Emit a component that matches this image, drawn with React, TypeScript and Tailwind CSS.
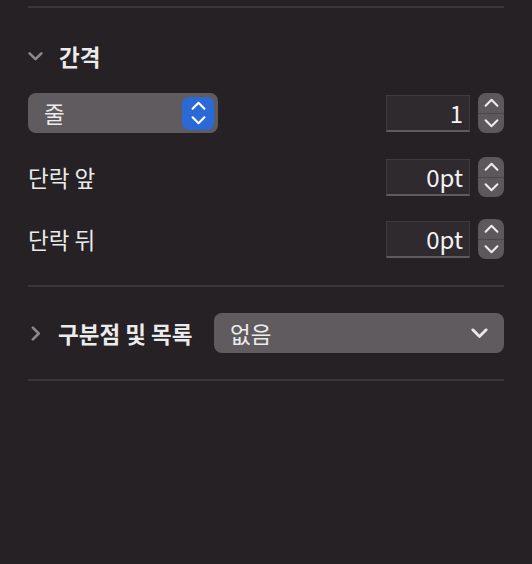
import React from 'react';

const FONT = { fontFamily: '"Noto Sans CJK KR", "Noto Sans", sans-serif' };

const Chevron: React.FC<{ dir: 'up' | 'down' | 'right'; size?: number; color?: string; stroke?: number }> = ({
  dir,
  size = 14,
  color = '#8c888c',
  stroke = 2.4,
}) => {
  const points =
    dir === 'down' ? '1.5,4 7,9.5 12.5,4' : dir === 'up' ? '1.5,10 7,4.5 12.5,10' : '4.5,1.5 10,7 4.5,12.5';
  return (
    <svg width={size} height={size} viewBox="0 0 14 14" fill="none" className="shrink-0">
      <polyline points={points} stroke={color} strokeWidth={stroke} strokeLinecap="round" strokeLinejoin="round" />
    </svg>
  );
};

const Stepper: React.FC = () => (
  <div className="flex h-[40px] w-[26px] flex-col overflow-hidden rounded-[8px] bg-[#5c585c]">
    <div className="flex flex-1 items-center justify-center border-b border-[#4a464a]">
      <Chevron dir="up" size={15} color="#ebe9eb" stroke={2} />
    </div>
    <div className="flex flex-1 items-center justify-center">
      <Chevron dir="down" size={15} color="#ebe9eb" stroke={2} />
    </div>
  </div>
);

const NumberField: React.FC<{ value: string }> = ({ value }) => (
  <div className="flex items-center gap-[8px]">
    <div className="flex h-[37px] w-[84px] items-center justify-end border border-[#3e3a3e] border-b-[2px] border-b-[#5e5a5e] bg-[#2e2a2e] pr-[6px] text-[24px] text-[#f4f2f4]">
      {value}
    </div>
    <Stepper />
  </div>
);

const Divider: React.FC = () => <div className="h-[2px] w-full bg-[#3a363a]" />;

const App: React.FC = () => {
  return (
    <div className="min-h-[564px] w-[532px] bg-[#252125] px-[28px] pt-[6px] text-[#ecebec]" style={FONT}>
      <Divider />

      {/* 간격 section */}
      <div className="mt-[34px] flex h-[28px] items-center gap-[16px]">
        <Chevron dir="down" size={15} />
        <span className="text-[22.5px] font-semibold leading-none">간격</span>
      </div>

      <div className="mt-[23px] flex h-[40px] items-center justify-between">
        <div className="flex h-[40px] w-[190px] items-center justify-between rounded-[8px] bg-[#5f5b5f] pl-[16px] pr-[4px]">
          <span className="text-[22.5px] leading-none">줄</span>
          <div className="flex h-[33px] w-[32px] flex-col items-center justify-center rounded-[7px] bg-[#2a69d6]">
            <Chevron dir="up" size={15} color="#ffffff" stroke={2} />
            <Chevron dir="down" size={15} color="#ffffff" stroke={2} />
          </div>
        </div>
        <NumberField value="1" />
      </div>

      <div className="mt-[24px] flex h-[40px] items-center justify-between">
        <span className="text-[22.5px] leading-none">단락 앞</span>
        <NumberField value="0pt" />
      </div>

      <div className="mt-[22px] flex h-[40px] items-center justify-between">
        <span className="text-[22.5px] leading-none">단락 뒤</span>
        <NumberField value="0pt" />
      </div>

      <div className="mt-[26px]">
        <Divider />
      </div>

      {/* 구분점 및 목록 */}
      <div className="mt-[26px] flex h-[40px] items-center">
        <Chevron dir="right" size={15} />
        <span className="ml-[15px] text-[22.5px] font-semibold leading-none">구분점 및 목록</span>
        <div className="ml-auto flex h-[40px] w-[290px] items-center justify-between rounded-[8px] bg-[#5f5b5f] pl-[16px] pr-[16px]">
          <span className="text-[22.5px] leading-none">없음</span>
          <Chevron dir="down" size={17} color="#ebe9eb" stroke={2.3} />
        </div>
      </div>

      <div className="mt-[26px]">
        <Divider />
      </div>
    </div>
  );
};

export default App;
